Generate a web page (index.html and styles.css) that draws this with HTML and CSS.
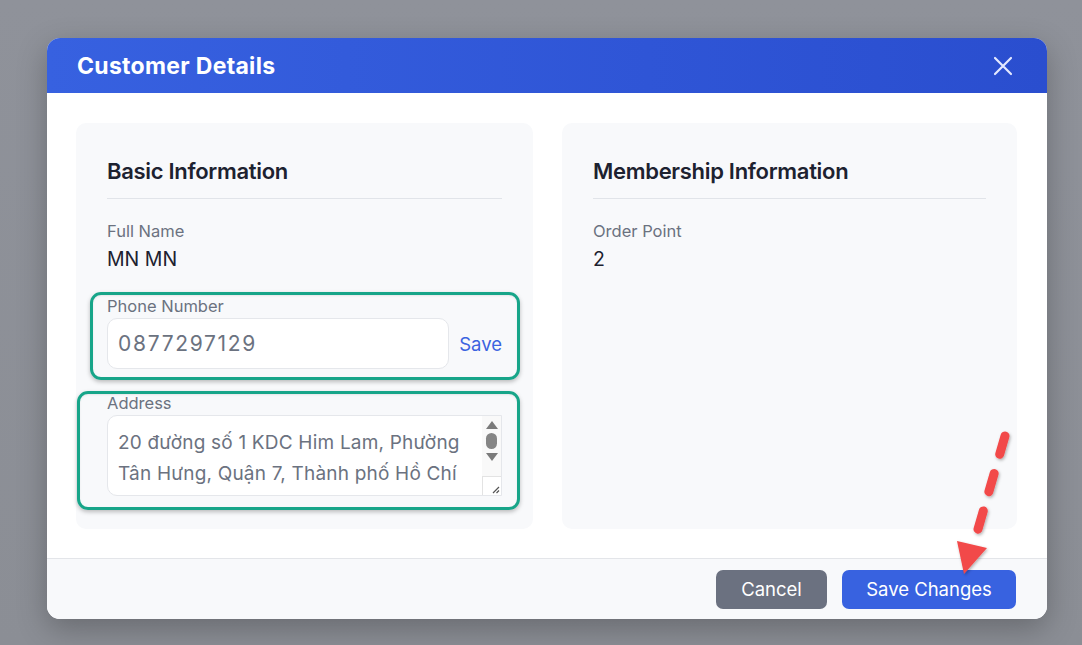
FILE: index.html
```html
<!DOCTYPE html>
<html lang="en">
<head>
<meta charset="utf-8">
<title>Customer Details</title>
<link rel="stylesheet" href="styles.css">
</head>
<body>
<div class="backdrop">
  <div class="modal">
    <div class="modal-header">
      <h1 class="modal-title">Customer Details</h1>
      <button class="close-btn" aria-label="Close">
        <svg width="20" height="20" viewBox="0 0 20 20"><path d="M2 2 L18 18 M18 2 L2 18" stroke="#e4e9ff" stroke-width="2.2" stroke-linecap="round"/></svg>
      </button>
    </div>
    <div class="modal-body">
      <section class="card card-left">
        <h2 class="card-title">Basic Information</h2>
        <div class="field">
          <div class="label">Full Name</div>
          <div class="value">MN MN</div>
        </div>
        <div class="field">
          <div class="label">Phone Number</div>
          <div class="input-row">
            <div class="input">0877297129</div>
            <span class="save-link">Save</span>
          </div>
        </div>
        <div class="field">
          <div class="label">Address</div>
          <div class="textarea">
            <div class="textarea-text">20 đường số 1 KDC Him Lam, Phường Tân Hưng, Quận 7, Thành phố Hồ Chí Minh</div>
            <div class="scrollbar">
              <span class="arrow-up"></span>
              <span class="thumb"></span>
              <span class="arrow-down"></span>
              <span class="grip">
                <svg width="12" height="12" viewBox="0 0 12 12"><path d="M10 4 L4 10 M10 7.5 L7.5 10" stroke="#555" stroke-width="1.2"/></svg>
              </span>
            </div>
          </div>
        </div>
        <div class="highlight hl-phone"></div>
        <div class="highlight hl-address"></div>
      </section>
      <section class="card">
        <h2 class="card-title">Membership Information</h2>
        <div class="field">
          <div class="label">Order Point</div>
          <div class="value">2</div>
        </div>
      </section>
    </div>
    <div class="modal-footer">
      <button class="btn btn-cancel">Cancel</button>
      <button class="btn btn-primary">Save Changes</button>
    </div>
  </div>
  <svg class="annotation" width="1082" height="645" viewBox="0 0 1082 645">
    <defs>
      <filter id="sh" x="-20%" y="-20%" width="140%" height="140%">
        <feDropShadow dx="1" dy="1.5" stdDeviation="1.5" flood-color="#000" flood-opacity="0.3"/>
      </filter>
    </defs>
    <g filter="url(#sh)">
      <path d="M1005 436 L976 536" stroke="#f24848" stroke-width="9" stroke-linecap="round" stroke-dasharray="19 20" fill="none"/>
      <polygon points="957,541 987,548 964,574" fill="#f24848"/>
    </g>
  </svg>
</div>
</body>
</html>
```

FILE: styles.css
```css
* { box-sizing: border-box; }
html, body { margin: 0; padding: 0; }
body {
  width: 1082px;
  height: 645px;
  overflow: hidden;
  font-family: Inter, "Liberation Sans", sans-serif;
  background: #8d9097;
}
.backdrop {
  position: relative;
  width: 1082px;
  height: 645px;
  padding: 38px 35px 0 47px;
  background: linear-gradient(180deg, #8f929a 0%, #8b8e95 100%);
}
.modal {
  width: 1000px;
  height: 581px;
  background: #fff;
  border-radius: 13px;
  overflow: hidden;
  display: flex;
  flex-direction: column;
  box-shadow: 0 10px 30px rgba(0,0,0,0.25);
}
.modal-header {
  height: 55px;
  flex: none;
  display: flex;
  align-items: center;
  justify-content: space-between;
  padding: 1px 34px 0 30px;
  background: linear-gradient(90deg, #3761e0 0%, #2f55d6 60%, #2a4ecf 100%);
}
.modal-title {
  margin: 0;
  color: #fff;
  font-size: 23px;
  font-weight: 700;
  letter-spacing: 0.3px;
}
.close-btn {
  border: 0;
  background: transparent;
  padding: 0;
  width: 20px;
  height: 20px;
  display: flex;
}
.modal-body {
  flex: 1;
  min-height: 0;
  display: grid;
  grid-template-columns: 457px 455px;
  column-gap: 29px;
  padding: 30px 30px 29px 29px;
}
.card {
  position: relative;
  background: #f8f9fb;
  border-radius: 10px;
  padding: 33px 31px 32px 31px;
}
.card-title {
  margin: 0 0 20px 0;
  padding-bottom: 12px;
  border-bottom: 1px solid #e1e4e9;
  font-size: 22px;
  line-height: 30px;
  font-weight: 600;
  color: #1d2230;
  letter-spacing: -0.3px;
}
.field { margin-top: 22px; }
.card-title + .field { margin-top: 0; }
.label {
  font-size: 16.5px;
  line-height: 24px;
  color: #6b7280;
}
.value {
  margin-top: 3px;
  font-size: 19.5px;
  line-height: 26px;
  color: #1d2230;
}
.input-row {
  display: flex;
  align-items: center;
  gap: 10px;
}
.input {
  flex: 1;
  height: 51px;
  display: flex;
  align-items: center;
  padding: 0 10px;
  background: #fff;
  border: 1px solid #e5e7eb;
  border-radius: 10px;
  font-size: 21px;
  letter-spacing: 1.7px;
  color: #6b7280;
}
.save-link {
  font-size: 18.5px;
  color: #3b63e0;
}
.textarea {
  height: 81px;
  display: flex;
  background: #fff;
  border: 1px solid #e5e7eb;
  border-radius: 10px 0 0 10px;
  overflow: hidden;
}
.textarea-text {
  flex: 1;
  padding: 11px 8px 0 10px;
  font-size: 19px;
  letter-spacing: 0.2px;
  line-height: 31px;
  color: #6b7280;
  overflow: hidden;
}
.scrollbar {
  width: 19px;
  flex: none;
  display: flex;
  flex-direction: column;
  align-items: center;
  padding-top: 5px;
  background: #f9f9f9;
}
.arrow-up {
  width: 0; height: 0;
  border-left: 6px solid transparent;
  border-right: 6px solid transparent;
  border-bottom: 8px solid #7b7b7b;
}
.thumb {
  width: 11px;
  height: 16px;
  margin: 4px 0;
  border-radius: 6px;
  background: #858585;
}
.arrow-down {
  width: 0; height: 0;
  border-left: 6px solid transparent;
  border-right: 6px solid transparent;
  border-top: 8px solid #7b7b7b;
}
.grip {
  margin-top: auto;
  width: 19px;
  height: 19px;
  display: flex;
  align-items: flex-end;
  justify-content: flex-end;
  border-top: 1px solid #e3e3e3;
  border-left: 1px solid #e3e3e3;
  background: #fff;
}
.highlight {
  position: absolute;
  border: 3px solid #17a589;
  border-radius: 11px;
  box-shadow: 0 2px 4px rgba(0,0,0,0.25), inset 0 1px 2px rgba(0,0,0,0.08);
  pointer-events: none;
}
.hl-phone { left: 14px; top: 169px; width: 430px; height: 88px; }
.hl-address { left: 1px; top: 268px; width: 443px; height: 119px; }
.modal-footer {
  height: 61px;
  flex: none;
  display: flex;
  justify-content: flex-end;
  align-items: center;
  gap: 15px;
  padding: 0 31px 0 0;
  border-top: 1px solid #e3e5e9;
  background: #f8f9fb;
}
.btn {
  height: 39px;
  border: 0;
  border-radius: 7px;
  font-family: Inter, "Liberation Sans", sans-serif;
  font-size: 18.5px;
  color: #fff;
  padding: 0;
}
.btn-cancel { width: 111px; background: #6b7180; }
.btn-primary { width: 174px; background: #3862e0; }
.annotation {
  position: absolute;
  left: 0;
  top: 0;
  pointer-events: none;
}
```
